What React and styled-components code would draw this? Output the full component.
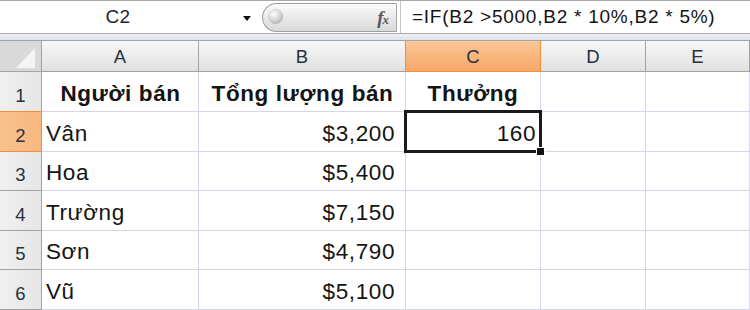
import React from "react";
import styled, { createGlobalStyle, css } from "styled-components";

const Global = createGlobalStyle`
  html, body { margin: 0; padding: 0; background: #ffffff; }
  body { font-family: "Liberation Sans", Arial, sans-serif; }
`;

const Frame = styled.div`
  width: 750px;
  height: 310px;
  overflow: hidden;
  background: #ffffff;
  display: flex;
  flex-direction: column;
`;

const FormulaBar = styled.div`
  height: 33px;
  display: flex;
  align-items: stretch;
  border-top: 1px solid #a8a8a8;
  border-bottom: 1px solid #a8a8a8;
  background: #ffffff;
`;

const NameBox = styled.div`
  width: 262px;
  position: relative;
  display: flex;
  align-items: center;
  justify-content: center;
  font-size: 19px;
  letter-spacing: 0.3px;
  color: #1c2433;
  padding-right: 26px;
  box-sizing: border-box;
`;

const DropArrow = styled.span`
  position: absolute;
  right: 11px;
  top: 15px;
  width: 0;
  height: 0;
  border-left: 4px solid transparent;
  border-right: 4px solid transparent;
  border-top: 5px solid #111;
`;

const Pill = styled.div`
  width: 135px;
  margin: 2px 0 1px;
  border: 1px solid #9e9e9e;
  border-right: 1px solid #a8a8a8;
  border-radius: 16px 0 0 16px;
  background: linear-gradient(#fbfbfb, #e6e6e6 60%, #d9d9d9);
  display: flex;
  align-items: center;
  justify-content: space-between;
  padding: 0 8px 0 5px;
  box-sizing: border-box;
`;

const Knob = styled.span`
  width: 15px;
  height: 15px;
  border-radius: 50%;
  background: radial-gradient(circle at 40% 35%, #ffffff 0%, #d6d6d6 45%, #9a9a9a 100%);
  margin-top: -3px;
`;

const Fx = styled.span`
  font-family: "Liberation Serif", "Times New Roman", serif;
  font-style: italic;
  font-weight: bold;
  font-size: 19px;
  color: #5a5a5a;
  letter-spacing: -1px;
  & > small {
    font-size: 13px;
  }
`;

const FormulaInput = styled.div`
  flex: 1;
  margin-left: 3px;
  border-left: 1px solid #c8c8c8;
  display: flex;
  align-items: center;
  padding-left: 11px;
  font-size: 19px;
  letter-spacing: 0.75px;
  color: #141414;
`;

const Band = styled.div`
  height: 6px;
  background: linear-gradient(#eef1f5, #dde2ea);
  border-bottom: 1px solid #a4a4a4;
`;

const Grid = styled.div`
  display: grid;
  grid-template-columns: 42px 157px 207px 135px 105px 104px;
  grid-template-rows: 31px 40px 40px 39px 40px 39px 40px;
`;

const headerBase = css`
  box-sizing: border-box;
  display: flex;
  align-items: center;
  justify-content: center;
  font-size: 18.5px;
  color: #27313f;
  border-right: 1px solid #a2a2a2;
  border-bottom: 1px solid #a2a2a2;
  background: ${(p) =>
    p.$active
      ? "linear-gradient(#fbc898, #f9b47c 55%, #f6a769)"
      : "linear-gradient(#f7f7f7, #ebebeb 55%, #e0e0e0)"};
  ${(p) =>
    p.$active &&
    css`
      border-color: #ee8f3e;
    `}
`;

const Corner = styled.div`
  ${headerBase};
  background: #d9d9d9;
  position: relative;
  &::after {
    content: "";
    position: absolute;
    right: 6px;
    bottom: 3px;
    width: 0;
    height: 0;
    border-left: 19px solid transparent;
    border-bottom: 20px solid #f4f4f4;
  }
`;

const ColHead = styled.div`
  ${headerBase};
  padding-top: 2px;
  ${(p) => p.$active && css`border-left: 1px solid #ee8f3e; margin-left: -1px;`}
`;

const RowHead = styled.div`
  ${headerBase};
  align-items: flex-end;
  padding-bottom: 4px;
  background: ${(p) =>
    p.$active ? "linear-gradient(90deg, #f9c28e, #f8b77f)" : "linear-gradient(90deg, #f0f0f0, #e6e6e6)"};
  ${(p) => p.$active && css`border-top: 1px solid #ee8f3e; margin-top: -1px;`}
`;

const Cell = styled.div`
  box-sizing: border-box;
  position: relative;
  display: flex;
  align-items: flex-end;
  padding: 0 ${(p) => p.$padRight || 3}px 4px 4px;
  border-right: 1px solid #d3d6ea;
  border-bottom: 1px solid #d3d6ea;
  font-size: 22.5px;
  letter-spacing: 0.6px;
  color: #141414;
  white-space: nowrap;
  justify-content: ${(p) =>
    p.$align === "right" ? "flex-end" : p.$align === "center" ? "center" : "flex-start"};
  font-weight: ${(p) => (p.$bold ? "bold" : "normal")};
  ${(p) => p.$selected && css`z-index: 2;`}
`;

const Selection = styled.div`
  position: absolute;
  left: -2px;
  top: -2px;
  right: -2px;
  bottom: -2px;
  border: 3px solid #1a1a1a;
  pointer-events: none;
`;

const FillHandle = styled.span`
  position: absolute;
  right: -6px;
  bottom: -6px;
  width: 7px;
  height: 7px;
  background: #111;
  border: 1px solid #fff;
`;

const cols = ["A", "B", "C", "D", "E"];
const rows = [
  { a: "Người bán", b: "Tổng lượng bán", c: "Thưởng", header: true },
  { a: "Vân", b: "$3,200", c: "160" },
  { a: "Hoa", b: "$5,400" },
  { a: "Trường", b: "$7,150" },
  { a: "Sơn", b: "$4,790" },
  { a: "Vũ", b: "$5,100" },
];

export default function App() {
  return (
    <>
      <Global />
      <Frame>
        <FormulaBar>
          <NameBox>
            C2
            <DropArrow />
          </NameBox>
          <Pill>
            <Knob />
            <Fx>
              f<small>x</small>
            </Fx>
          </Pill>
          <FormulaInput>=IF(B2 &gt;5000,B2 * 10%,B2 * 5%)</FormulaInput>
        </FormulaBar>
        <Band />
        <Grid>
          <Corner />
          {cols.map((c) => (
            <ColHead key={c} $active={c === "C"}>
              {c}
            </ColHead>
          ))}
          {rows.map((r, i) => (
            <React.Fragment key={i}>
              <RowHead $active={i === 1}>{i + 1}</RowHead>
              <Cell $bold={r.header} $align={r.header ? "center" : "left"}>
                {r.a}
              </Cell>
              <Cell
                $bold={r.header}
                $align={r.header ? "center" : "right"}
                $padRight={r.header ? 3 : 10}
              >
                {r.b}
              </Cell>
              <Cell
                $bold={r.header}
                $align={r.header ? "center" : "right"}
                $padRight={4}
                $selected={i === 1}
              >
                {r.c || ""}
                {i === 1 && (
                  <Selection>
                    <FillHandle />
                  </Selection>
                )}
              </Cell>
              <Cell />
              <Cell />
            </React.Fragment>
          ))}
        </Grid>
      </Frame>
    </>
  );
}
